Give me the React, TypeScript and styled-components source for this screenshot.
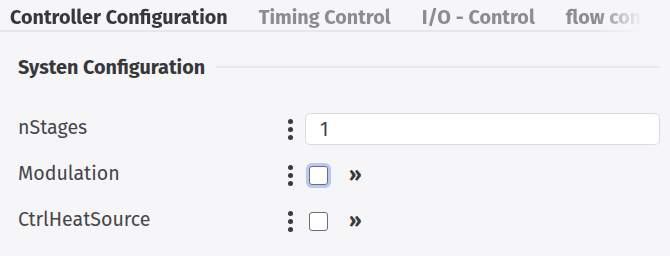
import React from "react";
import styled, { createGlobalStyle } from "styled-components";

const Global = createGlobalStyle`
  html, body { margin: 0; padding: 0; background: #f6f6f8; }
  body { font-family: "Fira Sans", "Open Sans", "Noto Sans", sans-serif; color: #3d3d40; }
`;

const Page = styled.div`
  width: 670px;
  height: 256px;
  overflow: hidden;
  background: #f6f6f8;
`;

const TabBar = styled.div`
  display: flex;
  gap: 29px;
  width: 662px;
  box-sizing: border-box;
  padding-left: 9px;
  height: 32px;
  border-bottom: 2px solid #e7e7ea;
  overflow: hidden;
  -webkit-mask-image: linear-gradient(to right, #000 598px, rgba(0,0,0,0) 642px);
  mask-image: linear-gradient(to right, #000 598px, rgba(0,0,0,0) 642px);
`;

const Tab = styled.div<{ $active?: boolean }>`
  flex: none;
  font-size: 19.8px;
  font-weight: 700;
  line-height: 34px;
  box-sizing: border-box;
  padding: 0 1px;
  white-space: nowrap;
  color: ${(p) => (p.$active ? "#38383b" : "#8d8d90")};
  border-bottom: 3px solid ${(p) => (p.$active ? "#4566cf" : "transparent")};
  height: 36px;
`;

const Section = styled.div`
  padding: 23px 10px 0 18px;
`;

const SectionHeader = styled.div`
  display: flex;
  align-items: center;
  gap: 11px;
  height: 24px;
`;

const SectionTitle = styled.div`
  font-size: 19.8px;
  font-weight: 700;
  color: #38383b;
  white-space: nowrap;
`;

const Rule = styled.div`
  flex: 1;
  height: 2px;
  background: #e9e9ec;
`;

const Rows = styled.div`
  display: flex;
  flex-direction: column;
  gap: 14px;
  margin-top: 34px;
`;

const Row = styled.div`
  display: grid;
  grid-template-columns: 265px 22px 1fr;
  align-items: center;
  height: 32px;
`;

const Label = styled.div`
  font-size: 19.6px;
  color: #46464a;
  margin-top: -3px;
`;

const Kebab = styled.div`
  display: flex;
  flex-direction: column;
  align-items: center;
  gap: 3px;
  width: 8px;
  margin-left: 3px;
  span {
    width: 5px;
    height: 5px;
    border-radius: 50%;
    background: #3a3a3d;
  }
`;

const Input = styled.input`
  box-sizing: border-box;
  width: 355px;
  height: 32px;
  border: 1px solid #dcdcdf;
  border-radius: 5px;
  background: #fff;
  padding: 0 14px;
  font-family: inherit;
  font-size: 19.6px;
  color: #3f3f42;
  outline: none;
`;

const Controls = styled.div`
  display: flex;
  align-items: center;
  gap: 21px;
  padding-left: 4px;
`;

const Check = styled.span<{ $focused?: boolean }>`
  box-sizing: border-box;
  width: 19px;
  height: 19px;
  border: 1.5px solid #6e6e72;
  border-radius: 3px;
  background: #fff;
  box-shadow: ${(p) => (p.$focused ? "0 0 0 3px #b7c8f3" : "none")};
`;

const More = styled.span`
  font-size: 20px;
  font-weight: 700;
  color: #3a3a3d;
  line-height: 1;
  margin-top: -3px;
`;

const Dots = () => (
  <Kebab>
    <span />
    <span />
    <span />
  </Kebab>
);

export default function App() {
  return (
    <Page>
      <Global />
      <TabBar>
        <Tab $active>Controller Configuration</Tab>
        <Tab>Timing Control</Tab>
        <Tab>I/O - Control</Tab>
        <Tab>flow control</Tab>
      </TabBar>
      <Section>
        <SectionHeader>
          <SectionTitle>Systen Configuration</SectionTitle>
          <Rule />
        </SectionHeader>
        <Rows>
          <Row>
            <Label>nStages</Label>
            <Dots />
            <Input defaultValue="1" />
          </Row>
          <Row>
            <Label>Modulation</Label>
            <Dots />
            <Controls>
              <Check $focused />
              <More>»</More>
            </Controls>
          </Row>
          <Row>
            <Label>CtrlHeatSource</Label>
            <Dots />
            <Controls>
              <Check />
              <More>»</More>
            </Controls>
          </Row>
        </Rows>
      </Section>
    </Page>
  );
}
